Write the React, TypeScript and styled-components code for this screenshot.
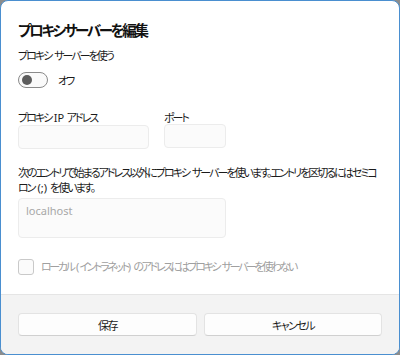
import React, { useState } from "react";
import styled, { createGlobalStyle } from "styled-components";

const GlobalStyle = createGlobalStyle`
  html, body {
    margin: 0;
    padding: 0;
    background: #8c8c8c;
  }
  body {
    font-family: "Noto Sans CJK JP", "Noto Sans", sans-serif;
    font-feature-settings: "palt";
  }
`;

const App: React.FC = (): JSX.Element => {
  const [enabled, setEnabled] = useState<boolean>(false);

  return (
    <>
      <GlobalStyle />
      <Dialog>
        <Content>
          <Title>プロキシサーバーを編集</Title>
          <Text>プロキシ サーバーを使う</Text>
          <ToggleRow>
            <Toggle $on={enabled} onClick={() => setEnabled(!enabled)}>
              <Knob $on={enabled} />
            </Toggle>
            <Text>{enabled ? "オン" : "オフ"}</Text>
          </ToggleRow>

          <FieldRow>
            <Field>
              <Label htmlFor="address">
                プロキシ <Latin>IP</Latin> アドレス
              </Label>
              <Input id="address" $width={131} />
            </Field>
            <Field>
              <Label htmlFor="port">ポート</Label>
              <Input id="port" $width={62} />
            </Field>
          </FieldRow>

          <Description>
            次のエントリで始まるアドレス以外にプロキシ サーバーを使います。エントリを区切るにはセミコ
            <br />
            ロン <Latin>(;)</Latin> を使います。
          </Description>
          <TextArea placeholder="localhost" />

          <CheckRow>
            <CheckBox />
            <DisabledText>
              ローカル <Latin>(</Latin>イントラネット<Latin>)</Latin> のアドレスにはプロキシ サーバーを使わない
            </DisabledText>
          </CheckRow>
        </Content>

        <Footer>
          <Button>保存</Button>
          <Button>キャンセル</Button>
        </Footer>
      </Dialog>
    </>
  );
};

export default App;

const Dialog = styled.div`
  box-sizing: border-box;
  width: 400px;
  height: 355px;
  display: flex;
  flex-direction: column;
  background: #ffffff;
  border: 1px solid #4a8fd0;
  border-radius: 8px;
  overflow: hidden;
`;

const Content = styled.div`
  flex: 1;
  display: flex;
  flex-direction: column;
  padding: 19px 17px 0 17px;
`;

const Latin = styled.span`
  font-family: "Noto Sans", sans-serif;
  letter-spacing: 0;
`;

const Title = styled.h1`
  margin: 0;
  font-size: 14.5px;
  line-height: 20px;
  font-weight: 700;
  letter-spacing: -2.3px;
  color: #111111;
`;

const Text = styled.span`
  font-size: 11px;
  line-height: 16px;
  letter-spacing: -2px;
  word-spacing: 2.5px;
  color: #1b1b1b;
  margin-top: 7px;
`;

const ToggleRow = styled.div`
  display: flex;
  align-items: center;
  column-gap: 10px;
  margin-top: 9px;

  ${Text} {
    margin-top: 0;
  }
`;

const Toggle = styled.button<{ $on: boolean }>`
  box-sizing: border-box;
  width: 30px;
  height: 16px;
  padding: 0 3px;
  display: flex;
  align-items: center;
  justify-content: ${(p) => (p.$on ? "flex-end" : "flex-start")};
  border: 1px solid ${(p) => (p.$on ? "#005fb8" : "#8a8a8a")};
  border-radius: 8px;
  background: ${(p) => (p.$on ? "#005fb8" : "#fafafa")};
  cursor: pointer;
`;

const Knob = styled.span<{ $on: boolean }>`
  width: 10px;
  height: 10px;
  border-radius: 50%;
  background: ${(p) => (p.$on ? "#ffffff" : "#5d5d5d")};
`;

const FieldRow = styled.div`
  display: flex;
  column-gap: 15px;
  margin-top: 22px;
`;

const Field = styled.div`
  display: flex;
  flex-direction: column;
`;

const Label = styled.label`
  font-size: 11px;
  line-height: 14px;
  letter-spacing: -2px;
  word-spacing: 2px;
  color: #1b1b1b;
`;

const Input = styled.input<{ $width: number }>`
  box-sizing: border-box;
  width: ${(p) => p.$width}px;
  height: 24px;
  border: 1px solid #ececec;
  border-radius: 4px;
  background: #fbfbfb;
  outline: none;
`;

const Description = styled.p`
  margin: 16px 0 0 0;
  font-size: 11px;
  line-height: 15px;
  letter-spacing: -2px;
  word-spacing: 2.5px;
  white-space: nowrap;
  color: #1b1b1b;
`;

const TextArea = styled.textarea`
  box-sizing: border-box;
  width: 208px;
  height: 40px;
  margin-top: 3px;
  padding: 5px 7px;
  resize: none;
  border: 1px solid #ececec;
  border-radius: 4px;
  background: #fbfbfb;
  outline: none;
  font-family: "Noto Sans", sans-serif;
  font-size: 11px;
  line-height: 14px;

  &::placeholder {
    color: #a8a8a8;
  }
`;

const CheckRow = styled.div`
  display: flex;
  align-items: center;
  column-gap: 7px;
  margin-top: 20px;
`;

const CheckBox = styled.span`
  box-sizing: border-box;
  flex: none;
  width: 16px;
  height: 16px;
  border: 1px solid #c9c9c9;
  border-radius: 3px;
  background: #fbfbfb;
`;

const DisabledText = styled.span`
  font-size: 11px;
  line-height: 16px;
  letter-spacing: -2.4px;
  word-spacing: 2.5px;
  white-space: nowrap;
  color: #a0a0a0;
`;

const Footer = styled.div`
  display: grid;
  grid-template-columns: 179px 1fr;
  column-gap: 7px;
  padding: 18px 17px 18px 17px;
  background: #f3f3f3;
  border-top: 1px solid #e5e5e5;
`;

const Button = styled.button`
  box-sizing: border-box;
  height: 23px;
  border: 1px solid #e3e3e3;
  border-bottom-color: #d0d0d0;
  border-radius: 4px;
  background: #fdfdfd;
  font-family: "Noto Sans CJK JP", sans-serif;
  font-feature-settings: "palt";
  font-size: 11px;
  letter-spacing: -1.5px;
  color: #1b1b1b;
  cursor: pointer;
`;
